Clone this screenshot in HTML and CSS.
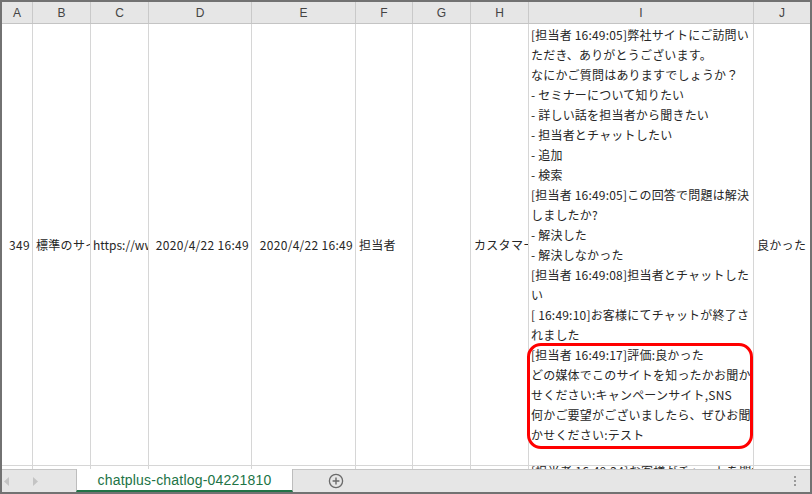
FILE: index.html
```html
<!DOCTYPE html>
<html lang="ja">
<head>
<meta charset="utf-8">
<link rel="stylesheet" href="styles.css">
</head>
<body>
<div class="window">
  <div class="sheet">
    <div class="cols hdr">
      <div class="hc">A</div><div class="hc">B</div><div class="hc">C</div><div class="hc">D</div><div class="hc">E</div><div class="hc">F</div><div class="hc">G</div><div class="hc">H</div><div class="hc">I</div><div class="hc">J</div>
    </div>
    <div class="cols datarow">
      <div class="c num">349</div>
      <div class="c">標準のサイト</div>
      <div class="c url">https://www.chatplus.jp/</div>
      <div class="c num">2020/4/22 16:49</div>
      <div class="c num">2020/4/22 16:49</div>
      <div class="c">担当者</div>
      <div class="c"></div>
      <div class="c">カスタマーサポート</div>
      <div class="c log">
        <div class="ln">[担当者 16:49:05]弊社サイトにご訪問い</div>
        <div class="ln">ただき、ありがとうございます。</div>
        <div class="ln">なにかご質問はありますでしょうか？</div>
        <div class="ln">- セミナーについて知りたい</div>
        <div class="ln">- 詳しい話を担当者から聞きたい</div>
        <div class="ln">- 担当者とチャットしたい</div>
        <div class="ln">- 追加</div>
        <div class="ln">- 検索</div>
        <div class="ln">[担当者 16:49:05]この回答で問題は解決</div>
        <div class="ln">しましたか?</div>
        <div class="ln">- 解決した</div>
        <div class="ln">- 解決しなかった</div>
        <div class="ln">[担当者 16:49:08]担当者とチャットした</div>
        <div class="ln">い</div>
        <div class="ln">[ 16:49:10]お客様にてチャットが終了さ</div>
        <div class="ln">れました</div>
        <div class="ln">[担当者 16:49:17]評価:良かった</div>
        <div class="ln">どの媒体でこのサイトを知ったかお聞か</div>
        <div class="ln">せください:キャンペーンサイト,SNS</div>
        <div class="ln">何かご要望がございましたら、ぜひお聞</div>
        <div class="ln">かせください:テスト</div>
        <div class="highlight"></div>
      </div>
      <div class="c">良かった</div>
    </div>
    <div class="cols nextrow">
      <div class="c"></div><div class="c"></div><div class="c"></div><div class="c"></div><div class="c"></div><div class="c"></div><div class="c"></div><div class="c"></div>
      <div class="c peek"><span class="peek-text">[担当者 16:49:24]お客様がチャットを開始しました</span></div>
      <div class="c"></div>
    </div>
  </div>
  <div class="tabbar">
    <div class="nav">
      <svg width="6" height="9" viewBox="0 0 6 9"><polygon points="5,0 5,9 0,4.5" fill="#c4c4c4"/></svg>
      <svg width="6" height="9" viewBox="0 0 6 9"><polygon points="1,0 1,9 6,4.5" fill="#c4c4c4"/></svg>
    </div>
    <div class="tab">chatplus-chatlog-04221810</div>
    <div class="add">
      <svg width="16" height="16" viewBox="0 0 16 16"><circle cx="8" cy="8" r="6.6" fill="none" stroke="#6a6a6a" stroke-width="1.3"/><path d="M8 4.6v6.8M4.6 8h6.8" stroke="#6a6a6a" stroke-width="1.4"/></svg>
    </div>
    <div class="spacer"></div>
    <div class="dots"><i></i><i></i><i></i></div>
  </div>
</div>
</body>
</html>
```

FILE: styles.css
```css
html, body {
  margin: 0;
  padding: 0;
  background: #ffffff;
}
.window {
  width: 812px;
  height: 494px;
  box-sizing: border-box;
  border: 2px solid #727272;
  display: flex;
  flex-direction: column;
  overflow: hidden;
  font-family: "Noto Sans CJK JP", "Noto Sans", sans-serif;
  color: #262626;
}
.sheet {
  display: flex;
  flex-direction: column;
}
.cols {
  display: grid;
  grid-template-columns: 31px 58px 58px 103px 104px 57px 58px 58px 225px 56px;
}
.hdr {
  height: 22px;
  box-sizing: border-box;
  background: #e6e6e6;
  border-bottom: 1px solid #c4c4c4;
}
.hc {
  box-sizing: border-box;
  border-right: 1px solid #c9c9c9;
  display: flex;
  align-items: center;
  justify-content: center;
  font-family: "Liberation Sans", Arial, sans-serif;
  font-size: 12px;
  color: #444444;
}
.hc:last-child {
  border-right: none;
}
.datarow {
  height: 442px;
}
.c {
  box-sizing: border-box;
  border-right: 1px solid #d6d6d6;
  border-bottom: 1px solid #d6d6d6;
  display: flex;
  align-items: center;
  padding: 0 2px 0 3px;
  font-size: 12px;
  line-height: 20px;
  letter-spacing: 0.3px;
  white-space: nowrap;
  overflow: hidden;
}
.c:last-child {
  border-right: none;
}
.num {
  justify-content: flex-end;
  padding-right: 2px;
}
.url {
  padding-left: 2px;
  letter-spacing: 0;
}
.log {
  position: relative;
  display: block;
  padding: 1px 0 0 2px;
  letter-spacing: 0.2px;
  overflow: visible;
}
.ln {
  height: 20px;
  white-space: nowrap;
}
.highlight {
  position: absolute;
  left: -2px;
  top: 319px;
  width: 226px;
  height: 106px;
  box-sizing: border-box;
  border: 3px solid #ff0000;
  border-radius: 14px;
}
.nextrow {
  height: 3px;
}
.nextrow .c {
  border-bottom: none;
}
.peek {
  align-items: flex-start;
  padding-left: 2px;
}
.peek-text {
  display: block;
  margin-top: -5px;
}
.tabbar {
  height: 23px;
  box-sizing: border-box;
  background: #e6e6e6;
  border-top: 1px solid #c6c6c6;
  display: flex;
  align-items: stretch;
}
.nav {
  width: 74px;
  display: flex;
  align-items: center;
  gap: 22px;
  padding-left: 2px;
  box-sizing: border-box;
}
.tab {
  width: 217px;
  box-sizing: border-box;
  margin-top: -1px;
  background: #ffffff;
  border-left: 1px solid #bdbdbd;
  border-right: 1px solid #bdbdbd;
  border-bottom: 2px solid #217346;
  display: flex;
  align-items: center;
  justify-content: center;
  font-family: "Liberation Sans", Arial, sans-serif;
  font-size: 14px;
  letter-spacing: 0.2px;
  color: #217346;
  padding-top: 1px;
}
.add {
  width: 86px;
  display: flex;
  align-items: center;
  justify-content: center;
}
.spacer {
  flex: 1;
}
.dots {
  width: 24px;
  box-sizing: border-box;
  display: flex;
  flex-direction: column;
  align-items: center;
  justify-content: center;
  gap: 2px;
  padding-right: 6px;
}
.dots i {
  display: block;
  width: 2px;
  height: 2px;
  background: #9a9a9a;
}
```
